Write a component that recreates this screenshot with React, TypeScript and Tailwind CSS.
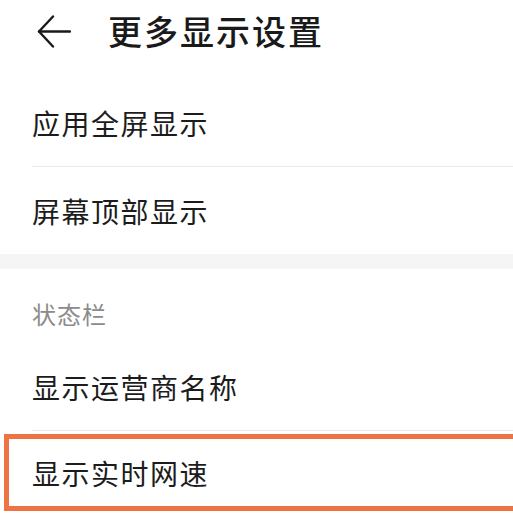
import React from 'react';

const font = { fontFamily: '"Noto Sans CJK SC", "Noto Sans", sans-serif' };

const BackArrow: React.FC = () => (
  <svg width="34" height="33" viewBox="0 0 34 33" fill="none" stroke="#1a1a1a" strokeWidth="2.4" strokeLinecap="round" strokeLinejoin="round">
    <path d="M2 16.5H33" />
    <path d="M16 1.5L2 16.5L16 31.5" />
  </svg>
);

const Row: React.FC<{ label: string; divider?: boolean }> = ({ label, divider }) => (
  <div className="pl-[32px]">
    <div className={`h-[87px] flex items-center ${divider ? 'border-b border-[#ebebeb]' : ''}`}>
      <span className="text-[28px] tracking-[1.5px] text-[#1c1c1c] leading-none">{label}</span>
    </div>
  </div>
);

export default function App() {
  return (
    <div className="w-[513px] h-[520px] bg-white overflow-hidden" style={font}>
      {/* header */}
      <div className="h-[62px] flex items-center">
        <div className="ml-[37px] w-[34px] flex">
          <BackArrow />
        </div>
        <h1 className="ml-[37px] text-[34px] tracking-[2px] font-medium text-[#1a1a1a] leading-none">更多显示设置</h1>
      </div>

      <div className="pt-[18px]">
        <Row label="应用全屏显示" divider />
        <Row label="屏幕顶部显示" />
      </div>

      <div className="h-[15px] bg-[#f5f5f5]" />

      <div className="h-[75px] pl-[32px] pt-[33px]">
        <span className="text-[24px] tracking-[1px] text-[#8c8c8c] leading-none">状态栏</span>
      </div>

      <Row label="显示运营商名称" divider />

      <div className="pt-[3px] pl-[4px]">
        <div className="h-[77px] border-[5px] border-r-0 border-[#ee7445] flex items-center pl-[23px]">
          <span className="text-[28px] tracking-[1.5px] text-[#1c1c1c] leading-none">显示实时网速</span>
        </div>
      </div>
    </div>
  );
}
